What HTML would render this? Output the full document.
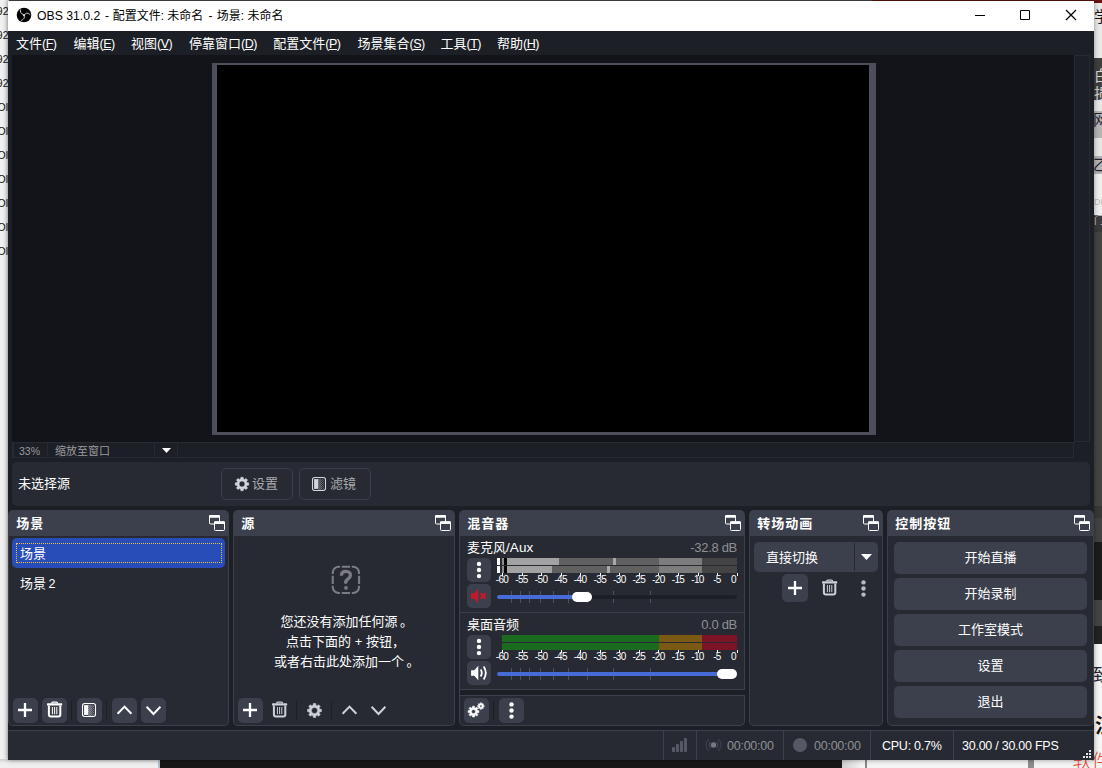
<!DOCTYPE html>
<html lang="zh-CN">
<head>
<meta charset="utf-8">
<title>OBS 31.0.2</title>
<style>
*{box-sizing:border-box;margin:0;padding:0}
html,body{width:1102px;height:768px;overflow:hidden;background:#efefef}
body{position:relative;font-family:"Liberation Sans","Noto Sans CJK SC",sans-serif;font-size:13px;color:#fff;line-height:1}
.l{font-size:12.5px;letter-spacing:-.25px}
.abs,.abs>*{position:absolute}
svg{display:block}
#bgL{left:0;top:0;width:9px;height:768px;background:linear-gradient(90deg,#f2f2f2 0,#eeeeee 5px,#dedede 7px,#cfcfcf 9px);overflow:hidden}
#bgL span{right:0.5px;font-size:10.5px;line-height:12px;color:#111;white-space:nowrap;font-family:"Liberation Sans",sans-serif}
#bgB{left:0;top:759px;width:1102px;height:9px;background:#efefef;overflow:hidden}
#bgR{left:1093px;top:0;width:9px;height:768px;background:#444;overflow:hidden}
#bgT{left:0;top:0;width:1102px;height:2px;background:#444}
#win{left:8px;top:1px;width:1086px;height:759px;background:#1d1f26;box-shadow:0 0 5px rgba(0,0,0,.4)}
#title{left:0;top:0;width:1086px;height:30px;background:#fff;color:#000;font-size:12px}
#title span{top:0;height:30px;line-height:31px;white-space:nowrap}
#menu{left:0;top:30px;width:1086px;height:24px;background:#1d1f26}
#menu span{top:1px;height:24px;line-height:24px;white-space:nowrap;color:#fff}
#menu i{font-style:normal;font-size:12.5px;letter-spacing:-.5px}
#menu u{text-decoration:underline;text-underline-offset:0.5px}
#prev{left:4px;top:54px;width:1062px;height:387px;background:#13141a}
#frame{left:204px;top:62px;width:664px;height:372px;background:#4c4e5b}
#canvas{left:209px;top:64px;width:652px;height:367px;background:#000}
#vsb{left:1066px;top:54px;width:16px;height:387px;border:1px solid #272a33;background:#1d1f26}
#hsb{left:4px;top:441px;width:1062px;height:16px;border:1px solid #272a33;background:#1d1f26}
#hsb div{top:-1px;height:16px;border:1px solid #272a33;font-size:11px;color:#9a9ba0;line-height:16px;white-space:nowrap}
#stb{left:4px;top:461px;width:1078px;height:44px;background:#272a33;border-radius:5px}
#stb .lbl{left:6px;top:0;height:44px;line-height:44px;white-space:nowrap}
.obtn{border:1px solid #3c404d;border-radius:5px;height:32px;top:6px;color:#a9aaae;white-space:nowrap}
.obtn span{top:0;height:30px;line-height:30px}
.dock{top:509px;height:216px}
.hd{left:0;top:0;right:0;height:26px;background:#3c404d;font-weight:bold;line-height:27px;padding-left:9px;white-space:nowrap;border-radius:5px 5px 0 0;letter-spacing:1px}
.bd{left:0;top:26px;right:0;bottom:0;background:#272a33;border:1px solid #3c404d;border-top:none;border-radius:0 0 5px 5px}
.flt{top:5px;right:4px;width:16px;height:16px}
.tb{width:25px;height:25px;border-radius:5px}
.tb.on{background:#3c404d}
.sep{width:1px;height:19px;background:#1d1f26}
.mb{width:24px;height:24px;border-radius:5px;background:#3c404d}
.cbtn{left:7px;width:193px;height:32px;background:#3c404d;border-radius:5px;text-align:center;line-height:32px;white-space:nowrap}
#status{left:0;top:729px;width:1086px;height:30px;background:#272a33;border-top:1px solid #3c404d}
#status .vs{top:0;width:1px;height:29px;background:#3c404d}
#status .tx{top:0;height:29px;line-height:31px;white-space:nowrap;font-size:12.5px;letter-spacing:-.25px}
.mlab{font-size:10px;color:#fff;white-space:nowrap;width:30px;text-align:center;letter-spacing:-0.6px;height:10px;line-height:10px}
.tick{width:1px;background:#fff}
.stick{width:1px;height:12px;background:#4d5262}
.lst{white-space:nowrap}
.p{position:relative;left:2.5px}
</style>
</head>
<body>
<div id="bgT" class="abs"><div style="left:872px;top:0;width:230px;height:1px;background:#5e1313"></div></div>
<div id="bgL" class="abs"><span style="top:5px">92</span><span style="top:29px">92</span><span style="top:53px">92</span><span style="top:77px">92</span><span style="top:101px;right:1px">Ol</span><span style="top:125px;right:1px">Ol</span><span style="top:149px;right:1px">Ol</span><span style="top:173px;right:1px">Ol</span><span style="top:197px;right:1px">Ol</span><span style="top:221px;right:1px">Ol</span><span style="top:245px;right:1px">Ol</span></div>
<div id="bgR" class="abs"><div style="left:0;top:0px;width:9px;height:3px;background:#6b1414"></div><div style="left:0;top:3px;width:9px;height:55px;background:#e9e9e9"></div><div style="left:0;top:58px;width:9px;height:42px;background:#3f3f3f"></div><div style="left:0;top:100px;width:9px;height:11px;background:#e6e6e6"></div><div style="left:0;top:111px;width:9px;height:27px;background:#b4b4b4"></div><div style="left:0;top:138px;width:9px;height:18px;background:#e6e6e6"></div><div style="left:0;top:156px;width:9px;height:18px;background:#b4b4b4"></div><div style="left:0;top:174px;width:9px;height:41px;background:#efefef"></div><div style="left:0;top:215px;width:9px;height:17px;background:#3a3a3a"></div><div style="left:0;top:232px;width:9px;height:274px;background:#444"></div><div style="left:0;top:506px;width:9px;height:12px;background:#383838"></div><div style="left:0;top:518px;width:9px;height:24px;background:#424242"></div><div style="left:0;top:542px;width:9px;height:58px;background:#1c1c1c"></div><div style="left:0;top:600px;width:9px;height:26px;background:#444"></div><div style="left:0;top:626px;width:9px;height:18px;background:#222"></div><div style="left:0;top:644px;width:9px;height:124px;background:#f6f6f6"></div><div style="left:1px;top:9px;font-size:15px;color:#111;white-space:nowrap">学</div><div style="left:1px;top:68px;font-size:15px;color:#d4d4d4;white-space:nowrap">白</div><div style="left:1px;top:86px;font-size:15px;color:#d4d4d4;white-space:nowrap">损</div><div style="left:0px;top:112px;font-size:15px;color:#223;white-space:nowrap">网</div><div style="left:0px;top:157px;font-size:15px;color:#223;white-space:nowrap">乙</div><div style="left:1px;top:198px;font-size:9px;color:#bbb;white-space:nowrap">DB</div><div style="left:1px;top:216px;font-size:10px;color:#ccc;white-space:nowrap">门</div><div style="left:0px;top:667px;font-size:17px;color:#223;white-space:nowrap">致</div><div style="left:2px;top:716px;font-size:20px;font-weight:bold;color:#111;white-space:nowrap">注</div><div style="left:0;top:597px;width:1px;height:28px;background:#a01818"></div></div>
<div id="bgB" class="abs"><div style="left:0;top:0;width:158px;height:9px;background:linear-gradient(180deg,#cfcfcf,#efefef 4px)"></div><div style="left:158px;top:1px;width:2px;height:8px;background:#b4bccb"></div><div style="left:160px;top:1px;width:682px;height:8px;background:#181818"></div><div style="left:842px;top:1px;width:260px;height:8px;background:linear-gradient(90deg,#d0d0d0,#f4f4f4 20px)"></div><div style="left:865px;top:1px;width:2px;height:8px;background:#8a8a8a"></div><div style="left:1028px;top:1px;width:6px;height:8px;background:#8c8c8c"></div></div>
<div class="abs" style="left:1072.5px;top:752px;font-size:19px;line-height:20px;font-weight:300;color:#e8452a;white-space:nowrap">软件</div>
<div id="win" class="abs">
<div id="title" class="abs"><svg width="16" height="16" viewBox="0 0 16 16" style="position:absolute;left:8px;top:6px"><circle cx="8" cy="8" r="7.3" fill="#000"/><g fill="none" stroke="#d4d4d4" stroke-width="0.95" stroke-linecap="round"><path d="M8 8.2Q5.6 7 4.700 5.400Q4.100 4.100 4.400 2.900"/><path d="M8 8.200Q9.300 6.400 10.800 6.100Q13 5.900 14.100 7.600"/><path d="M8 8.200Q8.900 10 8 11.300Q7 12.800 5.300 13.500"/></g><circle cx="8" cy="8.200" r="1" fill="#e2e2e2"/></svg><span style="left:29px;font-size:13.300px;transform:scaleX(.92);transform-origin:0 50%;line-height:29px">OBS 31.0.2</span><span style="left:97px">-</span><span style="left:104.700px">配置文件:</span><span style="left:159.300px">未命名</span><span style="left:200.500px">-</span><span style="left:208.800px">场景:</span><span style="left:239.500px">未命名</span>
<svg width="138" height="30" viewBox="0 0 138 30" style="position:absolute;left:946px;top:0"><path d="M21 14.500h10M66.500 9.500h9v9h-9z" stroke="#000" stroke-width="1" fill="none"/><path d="M112 9l10 10M122 9l-10 10" stroke="#000" stroke-width="1.250" fill="none"/></svg>
</div>
<div id="menu" class="abs"><span style="left:8px">文件<i>(<u>F</u>)</i></span><span style="left:65.5px">编辑<i>(<u>E</u>)</i></span><span style="left:123px">视图<i>(<u>V</u>)</i></span><span style="left:181px">停靠窗口<i>(<u>D</u>)</i></span><span style="left:265.3px">配置文件<i>(<u>P</u>)</i></span><span style="left:349.5px">场景集合<i>(<u>S</u>)</i></span><span style="left:432.5px">工具<i>(<u>T</u>)</i></span><span style="left:489px">帮助<i>(<u>H</u>)</i></span></div>
<div id="prev"></div><div id="frame"></div><div id="canvas"></div><div id="vsb"></div>
<div id="hsb" class="abs"><div style="left:0;width:35px;padding-left:5px;font-size:10.5px">33%</div><div style="left:34px;width:131px;padding-left:7px">缩放至窗口</div><div style="left:141px;width:24px;border-color:transparent #272a33 transparent #272a33"><svg width="9" height="5" viewBox="0 0 9 5" style="position:absolute;left:7px;top:5px"><path d="M0 0h9l-4.500 5z" fill="#fff"/></svg></div></div>
<div id="stb" class="abs"><div class="lbl">未选择源</div>
<div class="abs obtn" style="left:209px;width:72px"><svg width="16" height="16" viewBox="0 0 16 16" style="position:absolute;left:12px;top:7px"><path d="M14.70 6.83 L14.70 9.17 L12.94 9.27 L12.39 10.60 L13.56 11.91 L11.91 13.56 L10.60 12.39 L9.27 12.94 L9.17 14.70 L6.83 14.70 L6.73 12.94 L5.40 12.39 L4.09 13.56 L2.44 11.91 L3.61 10.60 L3.06 9.27 L1.30 9.17 L1.30 6.83 L3.06 6.73 L3.61 5.40 L2.44 4.09 L4.09 2.44 L5.40 3.61 L6.73 3.06 L6.83 1.30 L9.17 1.30 L9.27 3.06 L10.60 3.61 L11.91 2.44 L13.56 4.09 L12.39 5.40 L12.94 6.73Z M5.00 8.00a3.00 3.00 0 1 0 6.00 0a3.00 3.00 0 1 0 -6.00 0Z" fill="#d4d6dc" fill-rule="evenodd" stroke="#d4d6dc" stroke-width="0.6" stroke-linejoin="round"/></svg><span style="left:30px">设置</span></div>
<div class="abs obtn" style="left:287px;width:72px"><svg width="25" height="25" viewBox="0 0 25 25" style="display:none"></svg><div style="left:7px;top:3px"><svg width="25" height="25" viewBox="0 0 25 25" style=""><rect x="5.5" y="5.5" width="13" height="13" rx="2.2" stroke="#d4d6dc" stroke-width="1.1" fill="none"/><rect x="7.1" y="7.1" width="4.2" height="9.8" fill="#d4d6dc"/><rect x="11.5" y="6.9" width="0.9" height="0.6" fill="#d4d6dc"/><rect x="13.4" y="6.9" width="0.7" height="0.6" fill="#d4d6dc"/><rect x="15.3" y="6.9" width="0.5" height="0.6" fill="#d4d6dc"/><rect x="12.4" y="7.9" width="0.9" height="0.6" fill="#d4d6dc"/><rect x="14.3" y="7.9" width="0.7" height="0.6" fill="#d4d6dc"/><rect x="16.2" y="7.9" width="0.5" height="0.6" fill="#d4d6dc"/><rect x="11.5" y="8.9" width="0.9" height="0.6" fill="#d4d6dc"/><rect x="13.4" y="8.9" width="0.7" height="0.6" fill="#d4d6dc"/><rect x="15.3" y="8.9" width="0.5" height="0.6" fill="#d4d6dc"/><rect x="12.4" y="10.0" width="0.9" height="0.6" fill="#d4d6dc"/><rect x="14.3" y="10.0" width="0.7" height="0.6" fill="#d4d6dc"/><rect x="16.2" y="10.0" width="0.5" height="0.6" fill="#d4d6dc"/><rect x="11.5" y="11.0" width="0.9" height="0.6" fill="#d4d6dc"/><rect x="13.4" y="11.0" width="0.7" height="0.6" fill="#d4d6dc"/><rect x="15.3" y="11.0" width="0.5" height="0.6" fill="#d4d6dc"/><rect x="12.4" y="12.0" width="0.9" height="0.6" fill="#d4d6dc"/><rect x="14.3" y="12.0" width="0.7" height="0.6" fill="#d4d6dc"/><rect x="16.2" y="12.0" width="0.5" height="0.6" fill="#d4d6dc"/><rect x="11.5" y="13.0" width="0.9" height="0.6" fill="#d4d6dc"/><rect x="13.4" y="13.0" width="0.7" height="0.6" fill="#d4d6dc"/><rect x="15.3" y="13.0" width="0.5" height="0.6" fill="#d4d6dc"/><rect x="12.4" y="14.0" width="0.9" height="0.6" fill="#d4d6dc"/><rect x="14.3" y="14.0" width="0.7" height="0.6" fill="#d4d6dc"/><rect x="16.2" y="14.0" width="0.5" height="0.6" fill="#d4d6dc"/><rect x="11.5" y="15.1" width="0.9" height="0.6" fill="#d4d6dc"/><rect x="13.4" y="15.1" width="0.7" height="0.6" fill="#d4d6dc"/><rect x="15.3" y="15.1" width="0.5" height="0.6" fill="#d4d6dc"/><rect x="12.4" y="16.1" width="0.9" height="0.6" fill="#d4d6dc"/><rect x="14.3" y="16.1" width="0.7" height="0.6" fill="#d4d6dc"/><rect x="16.2" y="16.1" width="0.5" height="0.6" fill="#d4d6dc"/><rect x="11.5" y="17.1" width="0.9" height="0.6" fill="#d4d6dc"/><rect x="13.4" y="17.1" width="0.7" height="0.6" fill="#d4d6dc"/><rect x="15.3" y="17.1" width="0.5" height="0.6" fill="#d4d6dc"/><rect x="12.4" y="18.1" width="0.9" height="0.6" fill="#d4d6dc"/><rect x="14.3" y="18.1" width="0.7" height="0.6" fill="#d4d6dc"/><rect x="16.2" y="18.1" width="0.5" height="0.6" fill="#d4d6dc"/></svg></div><span style="left:30px">滤镜</span></div>
</div>
<div class="abs dock" style="left:0px;width:221px"><div class="hd" style="padding-left:8.3px">场景</div><div class="flt"><svg width="16" height="16" viewBox="0 0 16 16" style=""><rect x="0.5" y="0.8" width="10" height="8.2" rx="1" stroke="#fff" fill="none"/><rect x="0" y="0" width="11" height="2.8" rx="1" fill="#fff"/><rect x="5.5" y="7" width="10" height="8.5" rx="1" stroke="#fff" fill="#3c404d"/><rect x="5" y="6.3" width="11" height="2.8" rx="1" fill="#fff"/></svg></div><div class="abs bd"><div style="left:2.600px;top:2.300px;width:213.400px;height:29.400px;background:#284cb8;border-radius:5px"></div><div style="left:7px;top:7px;width:206px;height:20px;border:1px dotted #e8c44a"></div><div class="lst" style="left:11px;top:2.7px;height:30px;line-height:30px">场景</div><div class="lst" style="left:11px;top:32.8px;height:30px;line-height:30px"><span>场景</span><span class="l" style="margin-left:2.5px">2</span></div><div class="abs tb on" style="left:4px;top:162px"><svg width="25" height="25" viewBox="0 0 25 25" style=""><path d="M12 5v14M5 12h14" stroke="#fff" stroke-width="2.3" fill="none"/></svg></div><div class="abs tb on" style="left:33px;top:162px"><svg width="25" height="25" viewBox="0 0 25 25" style=""><rect x="5" y="5.300" width="15.200" height="2.300" rx=".6" fill="#fff"/><path d="M9.700 5.600v-.5q0-.9.9-.9h4q.9 0 .9.900v.5" stroke="#fff" stroke-width="1.200" fill="none"/><path d="M6.900 7.400v9.100q0 2 2 2h7.400q2 0 2-2V7.400" stroke="#fff" stroke-width="2" fill="none"/><path d="M10.400 9v7.200M12.600 9v7.200M14.800 9v7.200" stroke="#fff" stroke-width="1" fill="none"/></svg></div><div class="sep" style="left:62px;top:165px"></div><div class="abs tb on" style="left:68px;top:162px"><svg width="25" height="25" viewBox="0 0 25 25" style=""><rect x="5.5" y="5.5" width="13" height="13" rx="2.2" stroke="#fff" stroke-width="1.1" fill="none"/><rect x="7.1" y="7.1" width="4.2" height="9.8" fill="#fff"/><rect x="11.5" y="6.9" width="0.9" height="0.6" fill="#fff"/><rect x="13.4" y="6.9" width="0.7" height="0.6" fill="#fff"/><rect x="15.3" y="6.9" width="0.5" height="0.6" fill="#fff"/><rect x="12.4" y="7.9" width="0.9" height="0.6" fill="#fff"/><rect x="14.3" y="7.9" width="0.7" height="0.6" fill="#fff"/><rect x="16.2" y="7.9" width="0.5" height="0.6" fill="#fff"/><rect x="11.5" y="8.9" width="0.9" height="0.6" fill="#fff"/><rect x="13.4" y="8.9" width="0.7" height="0.6" fill="#fff"/><rect x="15.3" y="8.9" width="0.5" height="0.6" fill="#fff"/><rect x="12.4" y="10.0" width="0.9" height="0.6" fill="#fff"/><rect x="14.3" y="10.0" width="0.7" height="0.6" fill="#fff"/><rect x="16.2" y="10.0" width="0.5" height="0.6" fill="#fff"/><rect x="11.5" y="11.0" width="0.9" height="0.6" fill="#fff"/><rect x="13.4" y="11.0" width="0.7" height="0.6" fill="#fff"/><rect x="15.3" y="11.0" width="0.5" height="0.6" fill="#fff"/><rect x="12.4" y="12.0" width="0.9" height="0.6" fill="#fff"/><rect x="14.3" y="12.0" width="0.7" height="0.6" fill="#fff"/><rect x="16.2" y="12.0" width="0.5" height="0.6" fill="#fff"/><rect x="11.5" y="13.0" width="0.9" height="0.6" fill="#fff"/><rect x="13.4" y="13.0" width="0.7" height="0.6" fill="#fff"/><rect x="15.3" y="13.0" width="0.5" height="0.6" fill="#fff"/><rect x="12.4" y="14.0" width="0.9" height="0.6" fill="#fff"/><rect x="14.3" y="14.0" width="0.7" height="0.6" fill="#fff"/><rect x="16.2" y="14.0" width="0.5" height="0.6" fill="#fff"/><rect x="11.5" y="15.1" width="0.9" height="0.6" fill="#fff"/><rect x="13.4" y="15.1" width="0.7" height="0.6" fill="#fff"/><rect x="15.3" y="15.1" width="0.5" height="0.6" fill="#fff"/><rect x="12.4" y="16.1" width="0.9" height="0.6" fill="#fff"/><rect x="14.3" y="16.1" width="0.7" height="0.6" fill="#fff"/><rect x="16.2" y="16.1" width="0.5" height="0.6" fill="#fff"/><rect x="11.5" y="17.1" width="0.9" height="0.6" fill="#fff"/><rect x="13.4" y="17.1" width="0.7" height="0.6" fill="#fff"/><rect x="15.3" y="17.1" width="0.5" height="0.6" fill="#fff"/><rect x="12.4" y="18.1" width="0.9" height="0.6" fill="#fff"/><rect x="14.3" y="18.1" width="0.7" height="0.6" fill="#fff"/><rect x="16.2" y="18.1" width="0.5" height="0.6" fill="#fff"/></svg></div><div class="sep" style="left:97px;top:165px"></div><div class="abs tb on" style="left:103px;top:162px"><svg width="25" height="25" viewBox="0 0 25 25" style=""><path d="M5.6 15.8l6.9-7.2 6.9 7.2" stroke="#fff" stroke-width="2" fill="none"/></svg></div><div class="abs tb on" style="left:132px;top:162px"><svg width="25" height="25" viewBox="0 0 25 25" style=""><path d="M5.6 8.8l6.9 7.2 6.9-7.2" stroke="#fff" stroke-width="2" fill="none"/></svg></div></div></div>
<div class="abs dock" style="left:225px;width:222px"><div class="hd" style="padding-left:8.3px">源</div><div class="flt"><svg width="16" height="16" viewBox="0 0 16 16" style=""><rect x="0.5" y="0.8" width="10" height="8.2" rx="1" stroke="#fff" fill="none"/><rect x="0" y="0" width="11" height="2.8" rx="1" fill="#fff"/><rect x="5.5" y="7" width="10" height="8.5" rx="1" stroke="#fff" fill="#3c404d"/><rect x="5" y="6.3" width="11" height="2.8" rx="1" fill="#fff"/></svg></div><div class="abs bd"><div style="left:97px;top:29px"><svg width="30" height="30" viewBox="0 0 30 30" style=""><path d="M1.75 9.0V7.75a6.0 6.0 0 0 1 6.0 -6.0H9.0M20.8 1.75H22.05a6.0 6.0 0 0 1 6.0 6.0V9.0M28.05 20.8V22.05a6.0 6.0 0 0 1 -6.0 6.0H20.8M9.0 28.05H7.75a6.0 6.0 0 0 1 -6.0 -6.0V20.8M10.75 1.75H19.05M10.75 28.05H19.05M1.75 10.75V19.05M28.05 10.75V19.05" stroke="#7b7c81" stroke-width="2.1" fill="none"/><path d="M10.4 10.7C10.4 7.8 12.4 6.45 15 6.45C17.8 6.45 19.45 8.2 19.45 10.2C19.45 12.2 18.2 13.1 16.8 14.1C15.4 15.1 14.7 15.9 14.7 17.3" stroke="#7b7c81" stroke-width="3.3" fill="none"/><circle cx="14.7" cy="17.3" r="1.65" fill="#7b7c81"/><circle cx="15" cy="22.9" r="1.85" fill="#7b7c81"/></svg></div><div class="lst" style="left:1.5px;width:220px;top:76px;height:20px;line-height:20px;text-align:center">您还没有添加任何源<span class="p">。</span></div><div class="lst" style="left:1.5px;width:220px;top:96px;height:20px;line-height:20px;text-align:center">点击下面的 + 按钮，</div><div class="lst" style="left:1.5px;width:220px;top:116px;height:20px;line-height:20px;text-align:center">或者右击此处添加一个<span class="p">。</span></div><div class="abs tb on" style="left:4px;top:162px"><svg width="25" height="25" viewBox="0 0 25 25" style=""><path d="M12 5v14M5 12h14" stroke="#fff" stroke-width="2.3" fill="none"/></svg></div><div class="abs tb" style="left:33px;top:162px"><svg width="25" height="25" viewBox="0 0 25 25" style=""><rect x="5" y="5.300" width="15.200" height="2.300" rx=".6" fill="#cfd1d8"/><path d="M9.700 5.600v-.5q0-.9.9-.9h4q.9 0 .9.900v.5" stroke="#cfd1d8" stroke-width="1.200" fill="none"/><path d="M6.900 7.400v9.100q0 2 2 2h7.400q2 0 2-2V7.400" stroke="#cfd1d8" stroke-width="2" fill="none"/><path d="M10.400 9v7.200M12.600 9v7.200M14.800 9v7.200" stroke="#cfd1d8" stroke-width="1" fill="none"/></svg></div><div class="sep" style="left:62px;top:165px"></div><div class="abs tb" style="left:68px;top:162px"><svg width="25" height="25" viewBox="0 0 25 25" style=""><path d="M19.40 11.30 L19.40 13.70 L17.63 13.82 L17.06 15.20 L18.23 16.53 L16.53 18.23 L15.20 17.06 L13.82 17.63 L13.70 19.40 L11.30 19.40 L11.18 17.63 L9.80 17.06 L8.47 18.23 L6.77 16.53 L7.94 15.20 L7.37 13.82 L5.60 13.70 L5.60 11.30 L7.37 11.18 L7.94 9.80 L6.77 8.47 L8.47 6.77 L9.80 7.94 L11.18 7.37 L11.30 5.60 L13.70 5.60 L13.82 7.37 L15.20 7.94 L16.53 6.77 L18.23 8.47 L17.06 9.80 L17.63 11.18Z M9.40 12.50a3.10 3.10 0 1 0 6.20 0a3.10 3.10 0 1 0 -6.20 0Z" fill="#cfd1d8" fill-rule="evenodd" stroke="#cfd1d8" stroke-width="0.6" stroke-linejoin="round"/></svg></div><div class="sep" style="left:97px;top:165px"></div><div class="abs tb" style="left:103px;top:162px"><svg width="25" height="25" viewBox="0 0 25 25" style=""><path d="M5.6 15.8l6.9-7.2 6.9 7.2" stroke="#cfd1d8" stroke-width="2" fill="none"/></svg></div><div class="abs tb" style="left:132px;top:162px"><svg width="25" height="25" viewBox="0 0 25 25" style=""><path d="M5.6 8.8l6.9 7.2 6.9-7.2" stroke="#cfd1d8" stroke-width="2" fill="none"/></svg></div></div></div>
<div class="abs dock" style="left:451px;width:286px"><div class="hd" style="padding-left:8.3px">混音器</div><div class="flt"><svg width="16" height="16" viewBox="0 0 16 16" style=""><rect x="0.5" y="0.8" width="10" height="8.2" rx="1" stroke="#fff" fill="none"/><rect x="0" y="0" width="11" height="2.8" rx="1" fill="#fff"/><rect x="5.5" y="7" width="10" height="8.5" rx="1" stroke="#fff" fill="#3c404d"/><rect x="5" y="6.3" width="11" height="2.8" rx="1" fill="#fff"/></svg></div><div class="abs bd"><div class="lst" style="left:7px;top:2px;height:20px;line-height:20px">麦克风<span style="font-size:13.5px;letter-spacing:.1px">/Aux</span></div><div class="lst" style="right:7px;top:2px;height:20px;line-height:20px;color:#8f9094" ><span class="l" style="font-size:13px;letter-spacing:-.3px">-32.8 dB</span></div><div style="left:37px;top:22px;width:3px;height:7px;background:#fff;"></div><div style="left:42px;top:22px;width:2px;height:7px;background:#8c8c8c;"></div><div style="left:44px;top:22px;width:3px;height:7px;background:#000;"></div><div style="left:47px;top:22px;width:152px;height:7px;background:#606060;"></div><div style="left:199px;top:22px;width:43px;height:7px;background:#7c7c7c;"></div><div style="left:242px;top:22px;width:35px;height:7px;background:#444;"></div><div style="left:47px;top:22px;width:52px;height:7px;background:#a2a2a2;"></div><div style="left:153px;top:22px;width:3px;height:7px;background:#a8a8a8;"></div><div style="left:37px;top:30px;width:3px;height:7px;background:#fff;"></div><div style="left:42px;top:30px;width:2px;height:7px;background:#8c8c8c;"></div><div style="left:44px;top:30px;width:3px;height:7px;background:#000;"></div><div style="left:47px;top:30px;width:152px;height:7px;background:#606060;"></div><div style="left:199px;top:30px;width:43px;height:7px;background:#7c7c7c;"></div><div style="left:242px;top:30px;width:35px;height:7px;background:#444;"></div><div style="left:47px;top:30px;width:45px;height:7px;background:#a2a2a2;"></div><div style="left:147px;top:30px;width:3px;height:7px;background:#a8a8a8;"></div><div class="tick" style="left:42.0px;top:37px;height:3px"></div><div class="mlab" style="left:27.0px;top:38.5px">-60</div><div class="tick" style="left:61.5px;top:37px;height:3px"></div><div class="mlab" style="left:46.5px;top:38.5px">-55</div><div class="tick" style="left:81.1px;top:37px;height:3px"></div><div class="mlab" style="left:66.1px;top:38.5px">-50</div><div class="tick" style="left:100.6px;top:37px;height:3px"></div><div class="mlab" style="left:85.6px;top:38.5px">-45</div><div class="tick" style="left:120.2px;top:37px;height:3px"></div><div class="mlab" style="left:105.2px;top:38.5px">-40</div><div class="tick" style="left:139.8px;top:37px;height:3px"></div><div class="mlab" style="left:124.8px;top:38.5px">-35</div><div class="tick" style="left:159.3px;top:37px;height:3px"></div><div class="mlab" style="left:144.3px;top:38.5px">-30</div><div class="tick" style="left:178.9px;top:37px;height:3px"></div><div class="mlab" style="left:163.9px;top:38.5px">-25</div><div class="tick" style="left:198.4px;top:37px;height:3px"></div><div class="mlab" style="left:183.4px;top:38.5px">-20</div><div class="tick" style="left:218.0px;top:37px;height:3px"></div><div class="mlab" style="left:203.0px;top:38.5px">-15</div><div class="tick" style="left:237.5px;top:37px;height:3px"></div><div class="mlab" style="left:222.5px;top:38.5px">-10</div><div class="tick" style="left:257.0px;top:37px;height:3px"></div><div class="mlab" style="left:242.0px;top:38.5px">-5</div><div class="tick" style="left:276.6px;top:37px;height:3px"></div><div class="mlab" style="left:245.9px;top:38.5px;text-align:right">0</div><div class="mb" style="left:7px;top:22px"><svg width="24" height="24" viewBox="0 0 24 24" style=""><circle cx="12.0" cy="5.9" r="2.2" fill="#fff"/><circle cx="12.0" cy="12.0" r="2.2" fill="#fff"/><circle cx="12.0" cy="18.1" r="2.2" fill="#fff"/></svg></div><div class="mb" style="left:7px;top:48px"><svg width="24" height="24" viewBox="0 0 24 24" style=""><path d="M4 9.3h3.2l4-4.6v14.6l-4-4.6H4z" fill="#c4172c"/><path d="M13.6 9.4l5 5.2M18.6 9.4l-5 5.2" stroke="#c4172c" stroke-width="2.4" fill="none"/></svg></div><div class="stick" style="left:50.9px;top:55px"></div><div class="stick" style="left:59.8px;top:55px"></div><div class="stick" style="left:68.8px;top:55px"></div><div class="stick" style="left:79.8px;top:55px"></div><div class="stick" style="left:93.0px;top:55px"></div><div class="stick" style="left:108.1px;top:55px"></div><div class="stick" style="left:127.1px;top:55px"></div><div class="stick" style="left:153.0px;top:55px"></div><div class="stick" style="left:189.8px;top:55px"></div><div style="left:37px;top:59px;width:240px;height:4px;background:#1d1f26;border-radius:2px"></div><div style="left:37px;top:59px;width:80px;height:4px;background:#476bd7;border-radius:2px"></div><div style="left:112px;top:56px;width:20px;height:10px;background:#fff;border-radius:5px"></div><div style="left:0px;top:76px;width:285px;height:1px;background:#3c404d;"></div><div class="lst" style="left:7px;top:79px;height:20px;line-height:20px">桌面音频</div><div class="lst" style="right:7px;top:79px;height:20px;line-height:20px;color:#8f9094" ><span class="l" style="font-size:13px;letter-spacing:-.3px">0.0 dB</span></div><div style="left:42px;top:99px;width:157px;height:7px;background:#1a6a1f;"></div><div style="left:199px;top:99px;width:43px;height:7px;background:#7a5a12;"></div><div style="left:242px;top:99px;width:35px;height:7px;background:#7c1326;"></div><div style="left:42px;top:107px;width:157px;height:7px;background:#1a6a1f;"></div><div style="left:199px;top:107px;width:43px;height:7px;background:#7a5a12;"></div><div style="left:242px;top:107px;width:35px;height:7px;background:#7c1326;"></div><div class="tick" style="left:42.0px;top:114px;height:3px"></div><div class="mlab" style="left:27.0px;top:115.5px">-60</div><div class="tick" style="left:61.5px;top:114px;height:3px"></div><div class="mlab" style="left:46.5px;top:115.5px">-55</div><div class="tick" style="left:81.1px;top:114px;height:3px"></div><div class="mlab" style="left:66.1px;top:115.5px">-50</div><div class="tick" style="left:100.6px;top:114px;height:3px"></div><div class="mlab" style="left:85.6px;top:115.5px">-45</div><div class="tick" style="left:120.2px;top:114px;height:3px"></div><div class="mlab" style="left:105.2px;top:115.5px">-40</div><div class="tick" style="left:139.8px;top:114px;height:3px"></div><div class="mlab" style="left:124.8px;top:115.5px">-35</div><div class="tick" style="left:159.3px;top:114px;height:3px"></div><div class="mlab" style="left:144.3px;top:115.5px">-30</div><div class="tick" style="left:178.9px;top:114px;height:3px"></div><div class="mlab" style="left:163.9px;top:115.5px">-25</div><div class="tick" style="left:198.4px;top:114px;height:3px"></div><div class="mlab" style="left:183.4px;top:115.5px">-20</div><div class="tick" style="left:218.0px;top:114px;height:3px"></div><div class="mlab" style="left:203.0px;top:115.5px">-15</div><div class="tick" style="left:237.5px;top:114px;height:3px"></div><div class="mlab" style="left:222.5px;top:115.5px">-10</div><div class="tick" style="left:257.0px;top:114px;height:3px"></div><div class="mlab" style="left:242.0px;top:115.5px">-5</div><div class="tick" style="left:276.6px;top:114px;height:3px"></div><div class="mlab" style="left:245.9px;top:115.5px;text-align:right">0</div><div class="mb" style="left:7px;top:99px"><svg width="24" height="24" viewBox="0 0 24 24" style=""><circle cx="12.0" cy="5.9" r="2.2" fill="#fff"/><circle cx="12.0" cy="12.0" r="2.2" fill="#fff"/><circle cx="12.0" cy="18.1" r="2.2" fill="#fff"/></svg></div><div class="mb" style="left:7px;top:125px"><svg width="24" height="24" viewBox="0 0 24 24" style=""><path d="M4.1 9.3h3.2l4-4.6v14.6l-4-4.6H4.1z" fill="#fff"/><path d="M13.7 8.6q2.2 3.4 0 6.8" stroke="#fff" stroke-width="1.8" fill="none"/><path d="M16.7 5.600q4.200 6.400 0 12.800" stroke="#fff" stroke-width="1.800" fill="none"/></svg></div><div class="stick" style="left:50.9px;top:132px"></div><div class="stick" style="left:59.8px;top:132px"></div><div class="stick" style="left:68.8px;top:132px"></div><div class="stick" style="left:79.8px;top:132px"></div><div class="stick" style="left:93.0px;top:132px"></div><div class="stick" style="left:108.1px;top:132px"></div><div class="stick" style="left:127.1px;top:132px"></div><div class="stick" style="left:153.0px;top:132px"></div><div class="stick" style="left:189.8px;top:132px"></div><div style="left:37px;top:136px;width:240px;height:4px;background:#1d1f26;border-radius:2px"></div><div style="left:37px;top:136px;width:235px;height:4px;background:#476bd7;border-radius:2px"></div><div style="left:257px;top:133px;width:20px;height:10px;background:#fff;border-radius:5px"></div><div style="left:0px;top:153px;width:285px;height:1px;background:#3c404d;"></div><div style="left:0px;top:154px;width:285px;height:5px;background:#1d1f26;"></div><div style="left:0px;top:159px;width:285px;height:1px;background:#3c404d;"></div><div class="abs tb on" style="left:4px;top:162px"><svg width="25" height="25" viewBox="0 0 25 25" style=""><path d="M14.92 12.65 L14.92 14.55 L13.47 14.62 L13.03 15.69 L14.00 16.76 L12.66 18.10 L11.59 17.13 L10.52 17.57 L10.45 19.02 L8.55 19.02 L8.48 17.57 L7.41 17.13 L6.34 18.10 L5.00 16.76 L5.97 15.69 L5.53 14.62 L4.08 14.55 L4.08 12.65 L5.53 12.58 L5.97 11.51 L5.00 10.44 L6.34 9.10 L7.41 10.07 L8.48 9.63 L8.55 8.18 L10.45 8.18 L10.52 9.63 L11.59 10.07 L12.66 9.10 L14.00 10.44 L13.03 11.51 L13.47 12.58Z M7.40 13.60a2.10 2.10 0 1 0 4.20 0a2.10 2.10 0 1 0 -4.20 0Z" fill="#fff" fill-rule="evenodd" stroke="#fff" stroke-width="0.6" stroke-linejoin="round"/><path d="M20.15 7.53 L20.15 8.67 L19.13 8.67 L18.88 9.27 L19.60 10.00 L18.80 10.80 L18.07 10.08 L17.47 10.33 L17.47 11.35 L16.33 11.35 L16.33 10.33 L15.73 10.08 L15.00 10.80 L14.20 10.00 L14.92 9.27 L14.67 8.67 L13.65 8.67 L13.65 7.53 L14.67 7.53 L14.92 6.93 L14.20 6.20 L15.00 5.40 L15.73 6.12 L16.33 5.87 L16.33 4.85 L17.47 4.85 L17.47 5.87 L18.07 6.12 L18.80 5.40 L19.60 6.20 L18.88 6.93 L19.13 7.53Z M15.70 8.10a1.20 1.20 0 1 0 2.40 0a1.20 1.20 0 1 0 -2.40 0Z" fill="#fff" fill-rule="evenodd" stroke="#fff" stroke-width="0.6" stroke-linejoin="round"/></svg></div><div class="sep" style="left:33px;top:165px"></div><div class="abs tb on" style="left:39px;top:162px"><svg width="25" height="25" viewBox="0 0 25 25" style=""><circle cx="12.5" cy="6.4" r="2.2" fill="#fff"/><circle cx="12.5" cy="12.5" r="2.2" fill="#fff"/><circle cx="12.5" cy="18.6" r="2.2" fill="#fff"/></svg></div></div></div>
<div class="abs dock" style="left:741px;width:134px"><div class="hd" style="padding-left:8.3px">转场动画</div><div class="flt"><svg width="16" height="16" viewBox="0 0 16 16" style=""><rect x="0.5" y="0.8" width="10" height="8.2" rx="1" stroke="#fff" fill="none"/><rect x="0" y="0" width="11" height="2.8" rx="1" fill="#fff"/><rect x="5.5" y="7" width="10" height="8.5" rx="1" stroke="#fff" fill="#3c404d"/><rect x="5" y="6.3" width="11" height="2.8" rx="1" fill="#fff"/></svg></div><div class="abs bd"><div style="left:4px;top:6px;width:124px;height:30px;background:#3c404d;border-radius:5px"></div><div style="left:104px;top:7px;width:1px;height:28px;background:#272a33"></div><div class="lst" style="left:16px;top:6.5px;height:30px;line-height:30px">直接切换</div><div style="left:111px;top:18px"><svg width="11" height="6" viewBox="0 0 11 6" style=""><path d="M0 0h11l-5.500 6z" fill="#fff"/></svg></div><div class="abs tb on" style="left:32px;top:38px;width:26px;height:28px"><svg width="26" height="28" viewBox="0 0 26 28" style=""><path d="M13 7v14M6 14h14" stroke="#fff" stroke-width="2.3" fill="none"/></svg></div><div class="abs tb" style="left:67px;top:40px"><svg width="25" height="25" viewBox="0 0 25 25" style=""><rect x="5" y="5.300" width="15.200" height="2.300" rx=".6" fill="#cfd1d8"/><path d="M9.700 5.600v-.5q0-.9.9-.9h4q.9 0 .9.900v.5" stroke="#cfd1d8" stroke-width="1.200" fill="none"/><path d="M6.900 7.400v9.100q0 2 2 2h7.400q2 0 2-2V7.400" stroke="#cfd1d8" stroke-width="2" fill="none"/><path d="M10.400 9v7.200M12.600 9v7.200M14.800 9v7.200" stroke="#cfd1d8" stroke-width="1" fill="none"/></svg></div><div class="abs tb" style="left:101px;top:40px"><svg width="25" height="25" viewBox="0 0 25 25" style=""><circle cx="12.5" cy="6.4" r="2.2" fill="#b9babf"/><circle cx="12.5" cy="12.5" r="2.2" fill="#b9babf"/><circle cx="12.5" cy="18.6" r="2.2" fill="#b9babf"/></svg></div></div></div>
<div class="abs dock" style="left:879px;width:207px"><div class="hd" style="padding-left:8.3px">控制按钮</div><div class="flt"><svg width="16" height="16" viewBox="0 0 16 16" style=""><rect x="0.5" y="0.8" width="10" height="8.2" rx="1" stroke="#fff" fill="none"/><rect x="0" y="0" width="11" height="2.8" rx="1" fill="#fff"/><rect x="5.5" y="7" width="10" height="8.5" rx="1" stroke="#fff" fill="#3c404d"/><rect x="5" y="6.3" width="11" height="2.8" rx="1" fill="#fff"/></svg></div><div class="abs bd"><div class="cbtn" style="left:6px;top:6px">开始直播</div><div class="cbtn" style="left:6px;top:42px">开始录制</div><div class="cbtn" style="left:6px;top:78px">工作室模式</div><div class="cbtn" style="left:6px;top:114px">设置</div><div class="cbtn" style="left:6px;top:150px">退出</div></div></div>
<div id="status" class="abs"><div class="vs" style="left:655px"></div><div class="vs" style="left:688px"></div><div class="vs" style="left:775px"></div><div class="vs" style="left:862px"></div><div class="vs" style="left:945px"></div><div style="left:663px;top:7px"><svg width="17" height="15" viewBox="0 0 17 15" style=""><rect x="1" y="9" width="3" height="5" rx=".7" fill="#555866"/><rect x="5" y="6" width="3" height="8" rx=".7" fill="#555866"/><rect x="9" y="3" width="3" height="11" rx=".7" fill="#555866"/><rect x="13" y="0" width="3" height="14" rx=".7" fill="#555866"/></svg></div><div style="left:696.5px;top:6px"><svg width="17" height="16" viewBox="0 0 17 16" style=""><circle cx="8.5" cy="8" r="2.7" fill="#777980"/><g fill="none" stroke-width="1.2"><path stroke="#464854" d="M5.700 4.700a4.400 4.400 0 0 0 0 6.600M11.300 4.700a4.400 4.400 0 0 1 0 6.600"/><path stroke="#3c3e4a" d="M3.900 2.300a7.200 7.200 0 0 0 0 11.400M13.100 2.300a7.200 7.200 0 0 1 0 11.400"/></g></svg></div><div class="tx" style="left:719px;color:#8f9094">00:00:00</div><div style="left:785px;top:7px;width:14px;height:14px;border-radius:7px;background:#555966"></div><div class="tx" style="left:806px;color:#8f9094">00:00:00</div><div class="tx" style="left:874px">CPU: 0.7%</div><div class="tx" style="left:954px">30.00 / 30.00 FPS</div><div style="left:1075px;top:19px"><svg width="8" height="8" viewBox="0 0 8 8" style=""><rect x="6" y="0" width="2" height="2" fill="#e6e6e6"/><rect x="3" y="3" width="2" height="2" fill="#e6e6e6"/><rect x="6" y="3" width="2" height="2" fill="#e6e6e6"/><rect x="0" y="6" width="2" height="2" fill="#e6e6e6"/><rect x="3" y="6" width="2" height="2" fill="#e6e6e6"/><rect x="6" y="6" width="2" height="2" fill="#e6e6e6"/></svg></div></div>
</div>
</body>
</html>
